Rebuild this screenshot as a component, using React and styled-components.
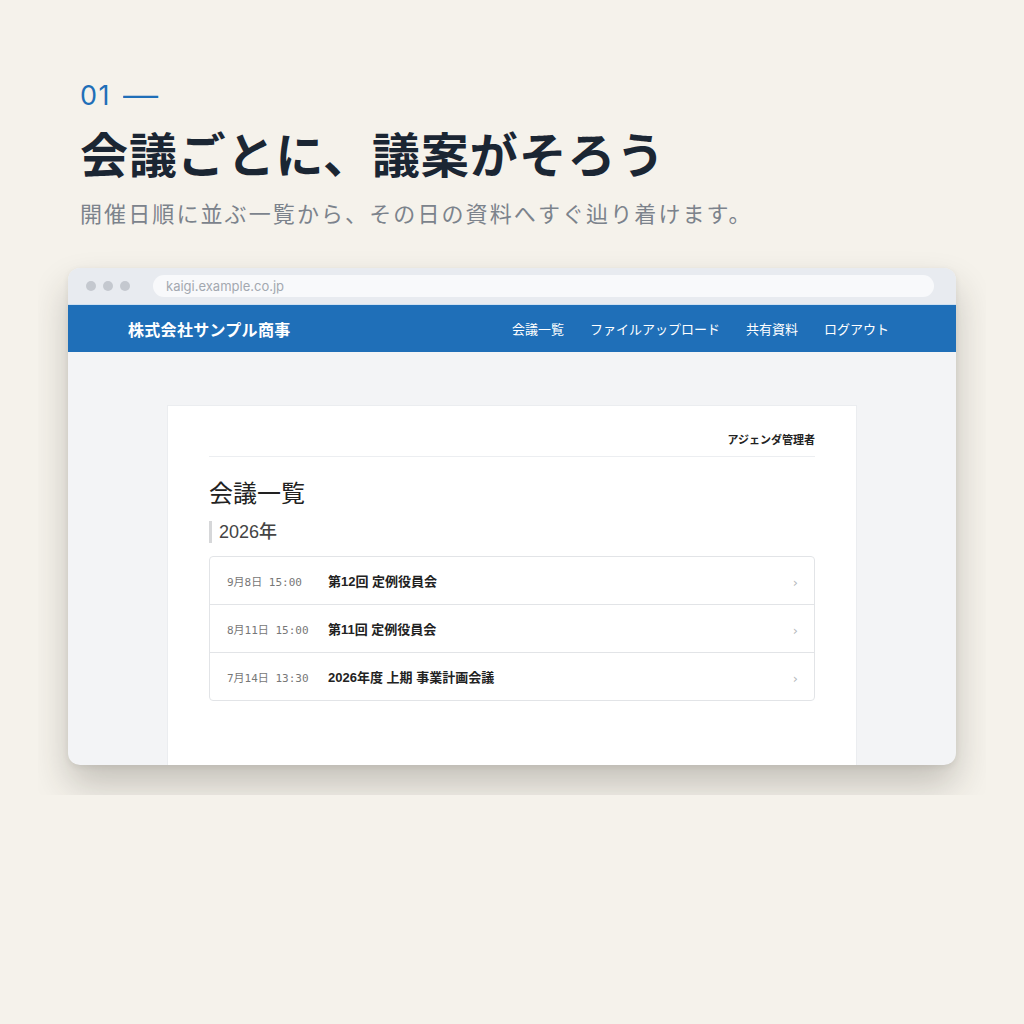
import React from "react";
import styled, { createGlobalStyle } from "styled-components";

const GlobalStyle = createGlobalStyle`
  html, body {
    margin: 0;
    padding: 0;
    background: #f5f2eb;
  }
  body {
    font-family: "Noto Sans CJK JP", "Noto Sans", sans-serif;
  }
`;

const Page = styled.div`
  width: 1024px;
  height: 1024px;
  background: #f5f2eb;
  box-sizing: border-box;
  padding-top: 78px;
`;

const Intro = styled.header`
  padding: 0 80px;
`;

const StepLabel = styled.div`
  font-family: "Inter", "Noto Sans", sans-serif;
  font-size: 27px;
  line-height: 36px;
  color: #1f6fb8;
  letter-spacing: 1.5px;
`;

const Dash = styled.span`
  display: inline-block;
  margin-left: 12px;
  transform: scaleX(1.3);
  transform-origin: left center;
`;

const Title = styled.h1`
  margin: 8px 0 0;
  font-size: 48px;
  line-height: 60px;
  font-weight: 700;
  color: #1b2633;
  letter-spacing: 0.9px;
`;

const Lead = styled.p`
  margin: 14px 0 0;
  font-size: 22px;
  line-height: 32px;
  color: #7c838c;
  letter-spacing: 2.1px;
`;

/* clips the window's shadow 30px out from its edges */
const Stage = styled.div`
  margin: 10px 38px 0;
  padding: 30px;
  overflow: hidden;
`;

const Window = styled.div`
  height: 497px;
  border-radius: 12px;
  overflow: hidden;
  background: #f3f4f6;
  box-shadow: 0 20px 36px rgba(40, 36, 28, 0.24), 0 2px 6px rgba(40, 36, 28, 0.08);
  display: flex;
  flex-direction: column;
`;

const Chrome = styled.div`
  height: 36px;
  flex: none;
  background: #e8ebf0;
  display: flex;
  align-items: center;
  padding: 0 22px 0 18px;
  border-bottom: 1px solid #cfe0f0;
`;

const Dots = styled.div`
  display: flex;
  gap: 7px;
  margin-right: 23px;
`;

const Dot = styled.span`
  width: 10px;
  height: 10px;
  border-radius: 50%;
  background: #c4c8cf;
`;

const Address = styled.div`
  flex: 1;
  height: 22px;
  border-radius: 11px;
  background: #f8f9fb;
  padding-left: 13px;
  display: flex;
  align-items: center;
  font-family: "Inter", "Noto Sans", sans-serif;
  font-size: 13px;
  color: #a3a8b0;
`;

const NavBar = styled.nav`
  height: 47px;
  flex: none;
  background: #1f6fb8;
  display: flex;
  align-items: center;
  justify-content: space-between;
  padding: 0 67px 0 60px;
  color: #fff;
`;

const Brand = styled.div`
  font-size: 16px;
  font-weight: 700;
  letter-spacing: 0.3px;
`;

const NavLinks = styled.div`
  display: flex;
  gap: 26px;
`;

const NavLink = styled.a`
  font-size: 13px;
  color: #fff;
  text-decoration: none;
`;

const Main = styled.main`
  flex: 1;
  display: flex;
  justify-content: center;
  padding-top: 53px;
`;

const Card = styled.section`
  width: 690px;
  background: #fff;
  border: 1px solid #ebedf0;
  border-bottom: none;
  box-sizing: border-box;
  padding: 25px 41px 0;
`;

const CardHeader = styled.div`
  display: flex;
  justify-content: flex-end;
  padding-bottom: 9px;
  border-bottom: 1px solid #eceef1;
  font-size: 11px;
  font-weight: 700;
  color: #222;
`;

const PageTitle = styled.h2`
  margin: 18px 0 0;
  font-size: 24px;
  line-height: 34px;
  font-weight: 400;
  color: #222;
`;

const YearHeading = styled.h3`
  margin: 12px 0 0;
  padding-left: 7px;
  border-left: 3px solid #d6d7d9;
  font-family: "Liberation Sans", "Noto Sans CJK JP", sans-serif;
  font-size: 18px;
  line-height: 22px;
  font-weight: 500;
  color: #444;
`;

const MeetingList = styled.ul`
  list-style: none;
  margin: 13px 0 0;
  padding: 0;
  border: 1px solid #e2e4e7;
  border-radius: 4px;
`;

const MeetingRow = styled.li`
  height: 47px;
  display: flex;
  align-items: center;
  padding: 0 16px 0 17px;
  & + & {
    border-top: 1px solid #e2e4e7;
  }
`;

const MeetingDate = styled.span`
  width: 101px;
  flex: none;
  font-family: "DejaVu Sans Mono", "Noto Sans CJK JP", monospace;
  font-size: 11px;
  color: #777;
`;

const MeetingName = styled.span`
  flex: 1;
  font-family: "Liberation Sans", "Noto Sans CJK JP", sans-serif;
  font-size: 13px;
  font-weight: 700;
  color: #222;
`;

const Chevron = styled.span`
  font-family: "DejaVu Sans", sans-serif;
  font-size: 13px;
  color: #b5b8bc;
  margin-top: 3px;
`;

const meetings = [
  { date: "9月8日 15:00", name: "第12回 定例役員会" },
  { date: "8月11日 15:00", name: "第11回 定例役員会" },
  { date: "7月14日 13:30", name: "2026年度 上期 事業計画会議" },
];

const navItems = ["会議一覧", "ファイルアップロード", "共有資料", "ログアウト"];

export default function App() {
  return (
    <Page>
      <GlobalStyle />
      <Intro>
        <StepLabel>
          01<Dash>—</Dash>
        </StepLabel>
        <Title>会議ごとに、議案がそろう</Title>
        <Lead>開催日順に並ぶ一覧から、その日の資料へすぐ辿り着けます。</Lead>
      </Intro>
      <Stage>
        <Window>
          <Chrome>
            <Dots>
              <Dot />
              <Dot />
              <Dot />
            </Dots>
            <Address>kaigi.example.co.jp</Address>
          </Chrome>
          <NavBar>
            <Brand>株式会社サンプル商事</Brand>
            <NavLinks>
              {navItems.map((item) => (
                <NavLink key={item} href="#">
                  {item}
                </NavLink>
              ))}
            </NavLinks>
          </NavBar>
          <Main>
            <Card>
              <CardHeader>アジェンダ管理者</CardHeader>
              <PageTitle>会議一覧</PageTitle>
              <YearHeading>2026年</YearHeading>
              <MeetingList>
                {meetings.map((m) => (
                  <MeetingRow key={m.name}>
                    <MeetingDate>{m.date}</MeetingDate>
                    <MeetingName>{m.name}</MeetingName>
                    <Chevron>›</Chevron>
                  </MeetingRow>
                ))}
              </MeetingList>
            </Card>
          </Main>
        </Window>
      </Stage>
    </Page>
  );
}
